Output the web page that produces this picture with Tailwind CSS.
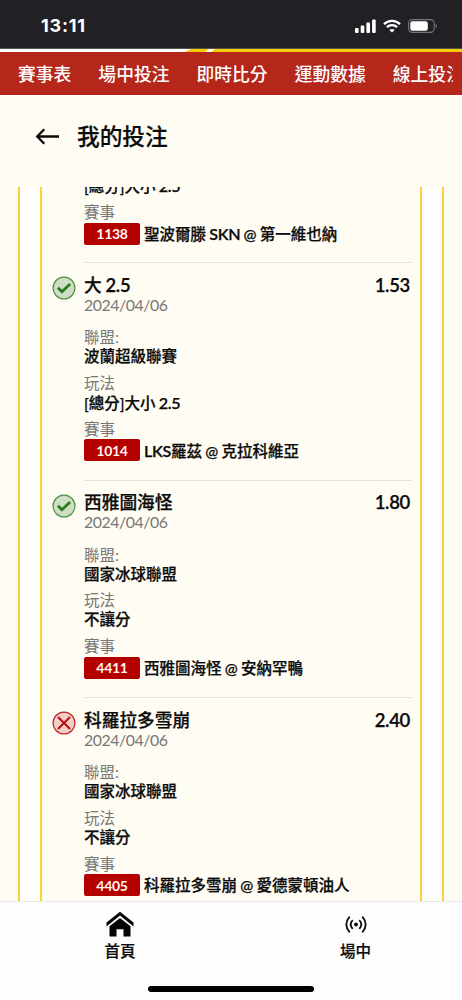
<!DOCTYPE html>
<html lang="zh-Hant">
<head>
<meta charset="utf-8">
<title>我的投注</title>
<script src="https://cdn.jsdelivr.net/npm/@tailwindcss/browser@4"></script>
</head>
<body class="w-[462px] h-[1000px] overflow-hidden bg-[#fffcf3] font-['Lato','Noto_Sans_CJK_TC',sans-serif] text-[#0b0b0b] flex flex-col">
<header class="h-12 shrink-0 bg-[#212125] flex items-center justify-between pl-[41px] pr-[24px] pt-[3px]">
  <span class="font-['Inter',sans-serif] font-bold text-[18px] tracking-[0.8px] text-white leading-5">13:11</span>
  <div class="flex items-center gap-[7px]">
    <svg width="21" height="14" viewBox="0 0 21 14" fill="#fff"><rect x="0" y="9" width="3.6" height="5" rx="1"/><rect x="5.7" y="6.6" width="3.6" height="7.4" rx="1"/><rect x="11.4" y="3.6" width="3.6" height="10.4" rx="1"/><rect x="17.1" y="0.4" width="3.6" height="13.6" rx="1"/></svg>
    <svg width="18" height="14" viewBox="0 0 18 14" fill="none" stroke="#fff" stroke-width="2.3"><path d="M1 5.2C5.5.8 12.500.8 17 5.200"/><path d="M3.900 8.200c2.900-2.700 7.300-2.700 10.200 0"/><path d="M9 13.600 6.300 10.900c1.500-1.300 3.900-1.300 5.400 0z" fill="#fff" stroke="none"/></svg>
    <svg width="30" height="14" viewBox="0 0 30 14"><rect x=".6" y=".6" width="25.600" height="12.800" rx="3.800" fill="none" stroke="#77777a" stroke-width="1.100"/><rect x="2.300" y="2.300" width="17.500" height="9.400" rx="2.200" fill="#fff"/><path d="M27.600 4.800v4.400c1.800-.7 1.800-3.700 0-4.400" fill="#77777a"/></svg>
  </div>
</header>
<svg class="block shrink-0" width="462" height="4" viewBox="0 0 462 4"><rect width="462" height="4" fill="#fff"/><path d="M191 1h18l-4 3h-20zM215 1h247v3H211z" fill="#f8cc00"/><rect width="462" height="1" fill="#55544f"/></svg>
<nav class="h-[43px] shrink-0 bg-[#b5261b] pl-[18px] pr-[9px]">
  <div class="flex h-full items-center gap-[27px] overflow-hidden whitespace-nowrap text-white font-medium text-[17.800px] leading-5"><span>賽事表</span><span>場中投注</span><span>即時比分</span><span>運動數據</span><span>線上投注</span></div>
</nav>
<div class="h-[92px] shrink-0 flex items-start pt-[28px] pl-[35px] gap-[17px]">
  <svg class="mt-[5px]" width="25" height="17" viewBox="0 0 25 17" fill="none" stroke="#0b0b0b" stroke-width="2.300"><path d="M24 8.500H2.500M9.300 1.300 2.200 8.500l7.100 7.200"/></svg>
  <h1 class="font-medium text-[22.700px] leading-[27px] [-webkit-text-stroke:0.2px]">我的投注</h1>
</div>
<main class="h-[714px] shrink-0 overflow-hidden px-[18px]">
  <div class="h-full bg-[#fffefc] border-x-2 border-[#fdd32f] px-[20px]">
    <div class="h-full bg-[#fffcf3] border-x-2 border-[#fdd32f] pl-[10px] pr-2 overflow-hidden"><div id="bets" class="-mt-[142.500px]"></div></div>
  </div>
</main>
<footer class="h-[99px] shrink-0 bg-[#fdfdfd] border-t border-[#e8e8e8]">
  <div class="flex h-[84px] pt-[9px] text-[15.500px] font-medium leading-5 [-webkit-text-stroke:0.2px]">
    <div class="w-[240px] shrink-0 flex flex-col items-center gap-[4px]">
      <svg width="28" height="26" viewBox="0 0 28 26" fill="#050505"><path d="M14 .7 27.500 11.600v3.900L14 4.600.5 15.500v-3.900z"/><path d="M14 7 24.500 15.300V25.500h-7v-7.200h-7v7.200h-7V15.300z"/></svg>
      <span>首頁</span>
    </div>
    <div class="w-[231px] shrink-0 flex flex-col items-center gap-[4px]">
      <svg width="22" height="26" viewBox="0 0 22 26" fill="none" stroke="#111" stroke-width="1.800"><circle cx="11" cy="13.500" r="1.900" fill="#111" stroke="none"/><path d="M7.700 9.200q-4 4.300 0 8.600M14.300 9.200q4 4.300 0 8.600M4.700 5.700q-6.800 7.800 0 15.600M17.300 5.700q6.800 7.800 0 15.600"/></svg>
      <span>場中</span>
    </div>
  </div>
  <div class="mx-auto w-[166px] h-[6px] rounded-full bg-black"></div>
</footer>
<script>
const won='<svg width="24" height="24" viewBox="0 0 24 24"><circle cx="12" cy="12" r="10.900" fill="#cfdfc5" stroke="#4c9347" stroke-width="1.200"/><path d="M6 11.700l3.900 4 8.200-7.700" fill="none" stroke="#2c7a20" stroke-width="2.800"/></svg>';
const lost='<svg width="24" height="24" viewBox="0 0 24 24"><circle cx="12" cy="12" r="10.900" fill="#f3cfc9" stroke="#c3272b" stroke-width="1.200"/><path d="M6 6l12 12M18 6 6 18" fill="none" stroke="#b80a0a" stroke-width="1.900"/></svg>';
const latin=t=>t.replace(/[A-Z0-9.]+/g,m=>`<span class="font-semibold text-[1.040em] tracking-[-0.3px]">${m}</span>`);
const bets=[
 ['','','','[總分]大小 2.5','1138','聖波爾滕 SKN @ 第一維也納',''],
 ['大 2.5','1.53','波蘭超級聯賽','[總分]大小 2.5','1014','LKS羅茲 @ 克拉科維亞',won],
 ['西雅圖海怪','1.80','國家冰球聯盟','不讓分','4411','西雅圖海怪 @ 安納罕鴨',won],
 ['科羅拉多雪崩','2.40','國家冰球聯盟','不讓分','4405','科羅拉多雪崩 @ 愛德蒙頓油人',lost]];
const head=b=>b[0]?`<div class="flex h-[19px] justify-between text-[17.700px] font-medium [-webkit-text-stroke:0.25px]"><span class="[word-spacing:-0.7px]">${latin(b[0])}</span><span class="pr-[2px] font-semibold text-[18.500px] tracking-[-0.3px]">${b[1]}</span></div>
<div class="h-[19px] text-[15.800px] tracking-[-0.4px] text-[#777]">2024/04/06</div>
<div class="mt-[14.500px] h-[19px] text-[#777]">聯盟:</div><div class="h-[19px] font-medium [-webkit-text-stroke:0.25px]">${b[2]}</div>
<div class="mt-[7.500px] h-[19px] text-[#777]">玩法</div>`:'<div class="h-[99px]"></div><div class="h-[19px]"></div>';
document.getElementById('bets').innerHTML=bets.map(b=>`<article class="flex h-[217.500px] gap-[8px]">
<div class="mt-[14px] w-[24px] shrink-0">${b[6]}</div>
<div class="flex-1 border-t border-[#e3e1dc] pt-[12.500px] text-[15.500px] leading-[19px] whitespace-nowrap">
${head(b)}<div class="h-[19px] font-medium [-webkit-text-stroke:0.25px] [word-spacing:-0.7px]">${latin(b[3])}</div>
<div class="mt-[8px] h-[19px] text-[#777]">賽事</div>
<div class="mt-[0.500px] flex h-[22px] items-center gap-[4px] font-medium"><span class="flex h-[22px] w-[56px] items-center justify-center rounded-[2px] bg-[#b50000] text-[14px] font-bold tracking-[-0.3px] text-[#fff6ef]">${b[4]}</span><span class="pt-px [word-spacing:-0.7px] [-webkit-text-stroke:0.25px]">${latin(b[5])}</span></div>
</div></article>`).join('');
</script>
</body>
</html>
